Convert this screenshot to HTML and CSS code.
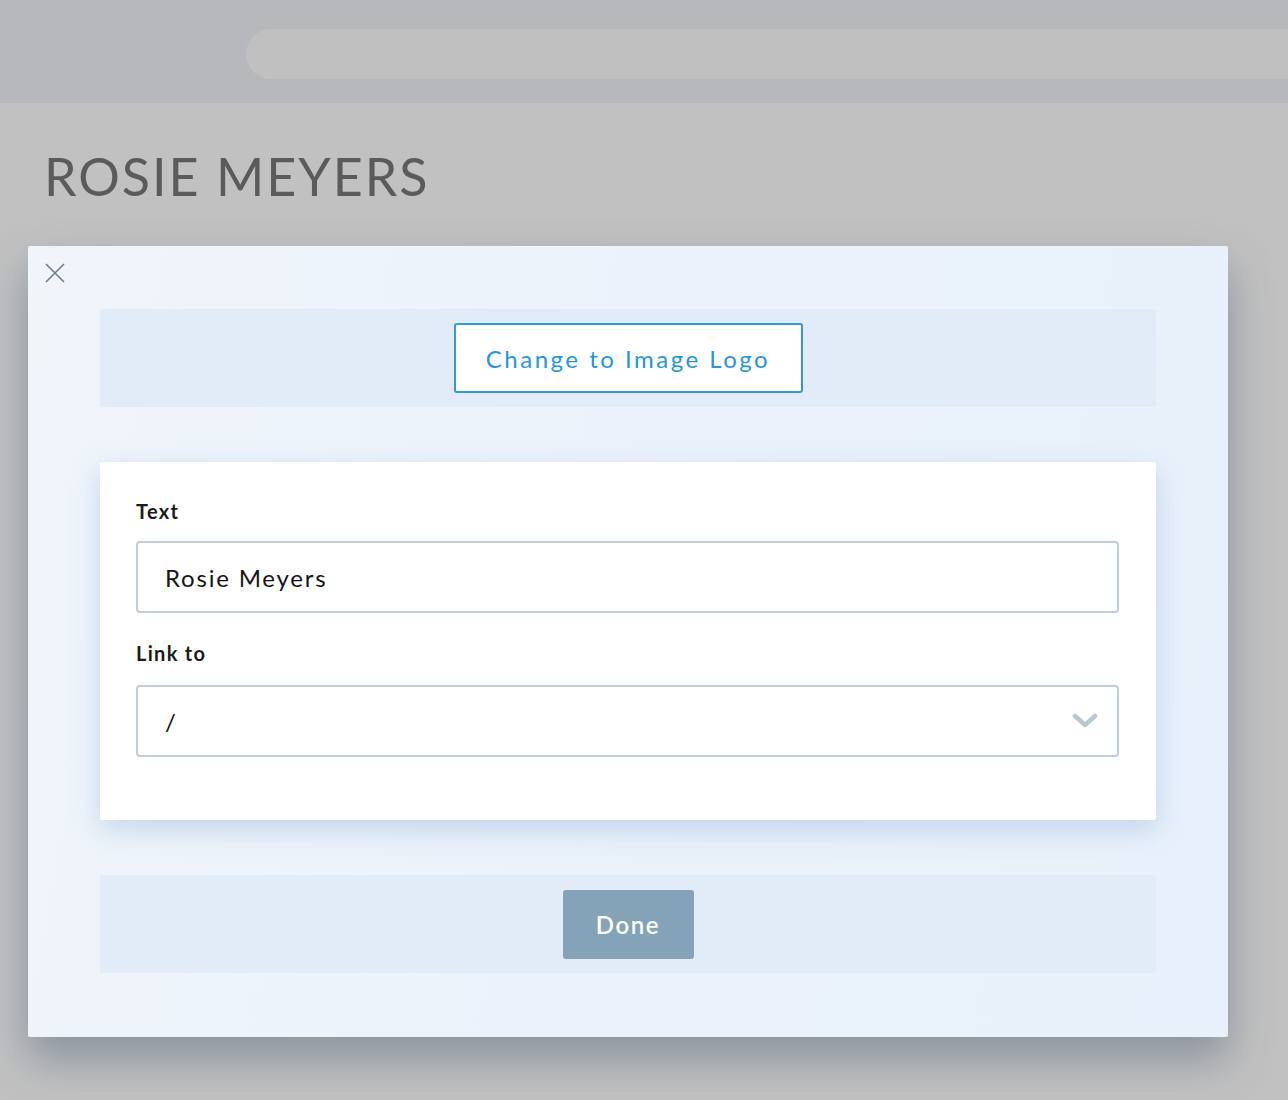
FILE: index.html
```html
<!DOCTYPE html>
<html lang="en">
<head>
    <meta charset="UTF-8">
    <meta name="viewport" content="width=device-width, initial-scale=1.0">
    <title>Edit logo</title>
    <link rel="stylesheet" href="styles.css">
</head>
<body>

    <div class="topbar">
        <div class="search-pill"></div>
    </div>

    <h1 class="site-title">ROSIE MEYERS</h1>

    <div class="modal">
        <button class="close-btn" aria-label="Close">
            <svg width="20" height="20" viewBox="0 0 20 20">
                <path d="M1 1 L19 19 M19 1 L1 19" stroke="#6d7d8b" stroke-width="1.6" fill="none"/>
            </svg>
        </button>

        <div class="band">
            <button class="outline-btn">Change to Image Logo</button>
        </div>

        <div class="card">
            <label class="field-label">Text</label>
            <div class="field">Rosie Meyers</div>

            <label class="field-label second">Link to</label>
            <div class="field select">
                <span>/</span>
                <svg class="chevron" width="26" height="16" viewBox="0 0 26 16">
                    <path d="M3 3 L13 12 L23 3" stroke="#b9c7d1" stroke-width="4.5" fill="none" stroke-linecap="round" stroke-linejoin="round"/>
                </svg>
            </div>
        </div>

        <div class="band">
            <button class="done-btn">Done</button>
        </div>
    </div>

</body>
</html>
```

FILE: styles.css
```css
body {
    margin: 0;
    padding-bottom: 100px;
    background-color: #c1c1c1;
    font-family: 'Lato', 'Open Sans', sans-serif;
}

/* Top bar */
.topbar {
    height: 103px;
    background-color: #b6b8bb;
    padding: 29px 0 0 246px;
    box-sizing: border-box;
    overflow: hidden;
}

.search-pill {
    height: 50px;
    width: calc(100% + 40px);
    background-color: #c0c0c0;
    border-radius: 25px;
}

.site-title {
    margin: 0;
    padding: 43px 0 0 44px;
    height: 143px;
    box-sizing: border-box;
    font-family: 'Lato', sans-serif;
    font-weight: 400;
    font-size: 52px;
    line-height: 60px;
    letter-spacing: 2px;
    color: #5b5b5b;
}

/* Modal */
.modal {
    position: relative;
    margin-left: 28px;
    width: 1200px;
    box-sizing: border-box;
    padding: 63px 72px 64px;
    background: linear-gradient(100deg, #f0f5fa 0%, #eaf1fb 60%, #e8f1fb 100%);
    border-radius: 2px;
    box-shadow: 0 22px 44px rgba(70, 90, 115, 0.45);
    display: flex;
    flex-direction: column;
    gap: 55px;
}

.close-btn {
    position: absolute;
    top: 17px;
    left: 17px;
    padding: 0;
    border: none;
    background: none;
    width: 20px;
    height: 20px;
    cursor: pointer;
}

.band {
    height: 98px;
    background-color: #e2ebf8;
    border-radius: 2px;
    display: flex;
    justify-content: center;
    align-items: center;
}

.outline-btn {
    width: 349px;
    height: 70px;
    background: #fff;
    border: 2px solid #2f9ae3;
    border-radius: 3px;
    color: #2196e6;
    font-family: inherit;
    font-size: 24px;
    letter-spacing: 2.5px;
    cursor: pointer;
}

.done-btn {
    width: 131px;
    height: 69px;
    background: #84a2b8;
    border: none;
    border-radius: 3px;
    color: #fff;
    font-family: inherit;
    font-size: 24px;
    font-weight: 600;
    letter-spacing: 1.6px;
    cursor: pointer;
}

/* Form card */
.card {
    background: #fff;
    border-radius: 2px;
    padding: 37px 37px 63px 36px;
    box-shadow: 0 10px 28px rgba(120, 160, 210, 0.35);
    display: flex;
    flex-direction: column;
}

.field-label {
    font-size: 20px;
    line-height: 24px;
    font-weight: 700;
    color: #1a1a1a;
    letter-spacing: 1.3px;
    margin-bottom: 18px;
}

.field-label.second {
    margin-top: 28px;
    margin-bottom: 20px;
}

.field {
    height: 72px;
    box-sizing: border-box;
    border: 2px solid #c3cdd5;
    border-radius: 4px;
    padding: 0 19px 0 27px;
    display: flex;
    align-items: center;
    font-size: 24px;
    letter-spacing: 1.8px;
    color: #141414;
}

.field.select {
    justify-content: space-between;
}
```
